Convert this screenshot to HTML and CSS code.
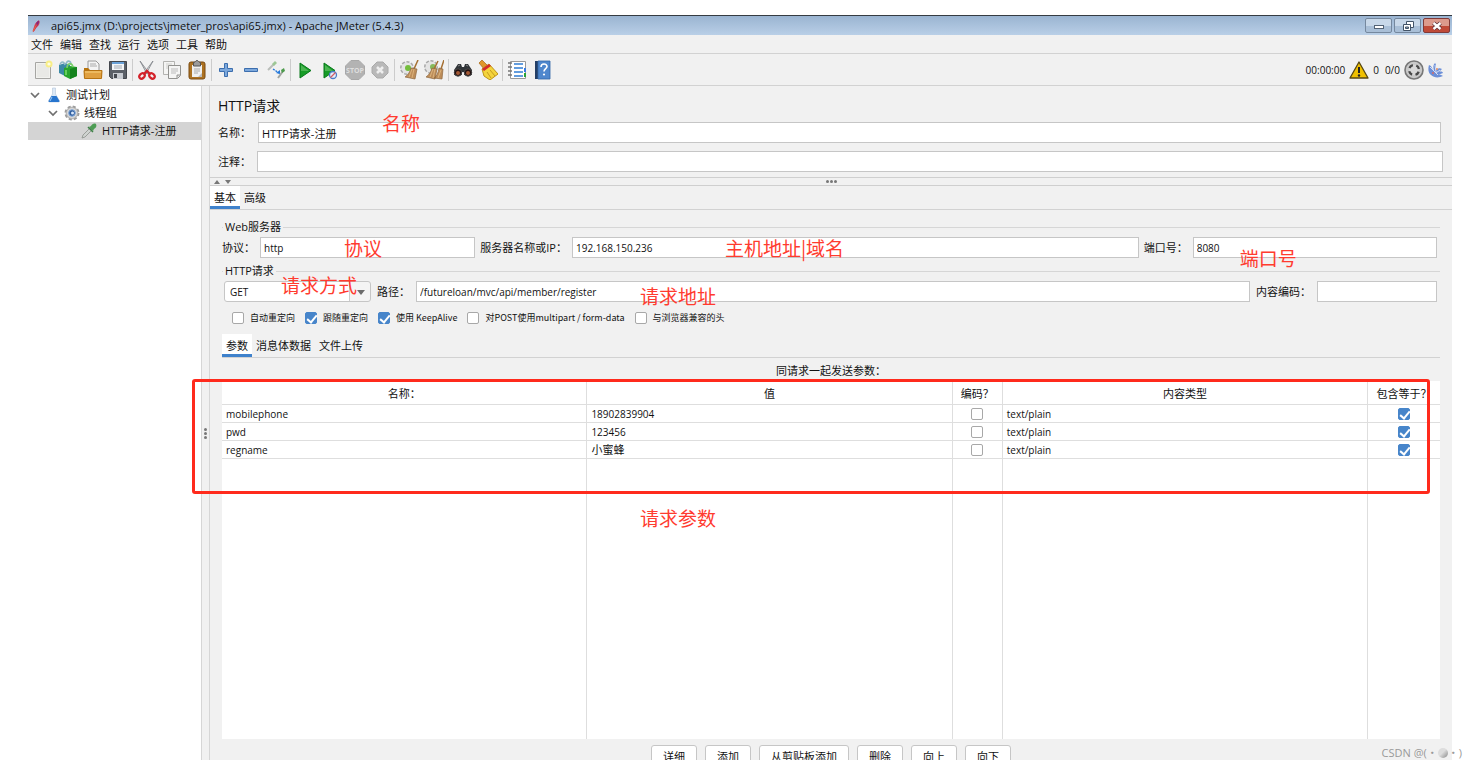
FILE: index.html
```html
<!DOCTYPE html>
<html lang="zh-CN">
<head>
<meta charset="utf-8">
<title>api65.jmx - Apache JMeter (5.4.3)</title>
<link rel="stylesheet" href="styles.css">
</head>
<body>
<div class="app">
  <header class="titlebar">
    <svg class="title-icon" viewBox="0 0 16 16"><path d="M4 15 6 9C7 5 9 2 12 1c1 3-1 7-4 9l-3 5z" fill="#d22648" stroke="#d22648"/><path d="M8 9c2-2 4-5 4-8-1 0-2 1-3 2z" fill="#7b2a80"/><path d="M4 15 9 6" stroke="#f08038" fill="none"/></svg>
    <span class="title-text">api65.jmx (D:\projects\jmeter_pros\api65.jmx) - Apache JMeter (5.4.3)</span>
    <div class="window-buttons">
      <button class="win" aria-label="最小化"><svg viewBox="0 0 16 12"><rect x="3.500" y="5.500" width="9" height="3" fill="#fff" stroke="#536375"/></svg></button>
      <button class="win" aria-label="还原"><svg viewBox="0 0 16 12"><path d="M6.500 1.500h7v6h-7z" fill="#fff" stroke="#435468"/><path d="M3.500 4.500h7v6h-7z" fill="#fff" stroke="#435468"/><path d="M5.500 7h3v1.500h-3z" fill="#9ab" stroke="#435468"/></svg></button>
      <button class="win close" aria-label="关闭"><svg viewBox="0 0 16 12"><path d="m4.500 3 7 6m0-6-7 6" stroke="#5b3038" stroke-width="4"/><path d="m4.500 3 7 6m0-6-7 6" stroke="#fff" stroke-width="2.400"/></svg></button>
    </div>
  </header>
  <nav class="menubar">
    <button>文件</button><button>编辑</button><button>查找</button><button>运行</button><button>选项</button><button>工具</button><button>帮助</button>
  </nav>
  <div class="toolbar">
    <button class="tool" aria-label="新建"><svg viewBox="0 0 20 20"><path d="M2.500 2.500h15v16h-15z" fill="#f2f2ef" stroke="#a6a6a3"/><path d="M4 4h12v13H4z" fill="#e9e9e6"/><circle cx="16" cy="4" r="3.500" fill="#f8ee86"/><circle cx="16" cy="4" r="1.600" fill="#fffde0"/></svg></button>
    <button class="tool" aria-label="模板"><svg viewBox="0 0 20 20"><path d="m1 5 6-2 5 2v9l-5 2-6-3z" fill="#3b89a6"/><path d="M2 5c1-4 4-4 5 0m1-1c1-4 5-4 5 1" fill="none" stroke="#8fb9c7" stroke-width="1.600"/><path d="m6 8 6-2 7 1v9l-7 3-6-3z" fill="#28a52e"/><path d="m12 9 7-2v9l-7 3z" fill="#14831d"/><path d="M9 8c0-5 5-6 6-1" fill="none" stroke="#79cf66" stroke-width="1.600"/><path d="M8 10v5" stroke="#7ddc70" stroke-width="1.500"/></svg></button>
    <button class="tool" aria-label="打开"><svg viewBox="0 0 20 20"><path d="M5 1h8l3 3v7H5z" fill="#f4f4f4" stroke="#989898"/><path d="M7 4h6M7 6h7" stroke="#aaa"/><path d="M1 8h4l2 2h12v8H1z" fill="#b8740d"/><path d="M1 10.500h18l-.5 8h-17z" fill="#e0a040" stroke="#b67313"/><path d="M2 12h16" stroke="#f9d37e"/></svg></button>
    <button class="tool" aria-label="保存"><svg viewBox="0 0 20 20"><path d="M1.500 1.500h17v17h-15l-2-2z" fill="#5b6068" stroke="#43474d"/><path d="M4 2h12v8H4z" fill="#f4f6f8"/><path d="M4 2h12v2H4z" fill="#6ba2d8"/><path d="M6 6h8M6 8h8" stroke="#a5abb3"/><path d="M5 13h10v6H5z" fill="#c8ccd2"/><path d="M6 14h3v4H6z" fill="#454950"/></svg></button>
    <span class="sep"></span>
    <button class="tool" aria-label="剪切"><svg viewBox="0 0 20 20"><path d="m3 1 9 12-2 1z" fill="#d2d5d7" stroke="#7d8286" stroke-width=".8"/><path d="m16 1-9 12 2 1z" fill="#eceeef" stroke="#7d8286" stroke-width=".8"/><ellipse cx="5" cy="16" rx="3" ry="2.300" transform="rotate(-45 5 16)" fill="none" stroke="#d3222a" stroke-width="2.200"/><ellipse cx="15" cy="16" rx="3" ry="2.300" transform="rotate(45 15 16)" fill="none" stroke="#d3222a" stroke-width="2.200"/><path d="m7 14 3-3 3 3" fill="none" stroke="#d3222a" stroke-width="2.300"/></svg></button>
    <button class="tool" aria-label="复制"><svg viewBox="0 0 20 20"><path d="M1.500 1.500h11v13h-11z" fill="#f5f5f4" stroke="#b3b3b0"/><path d="M4 4h6M4 6h6M4 8h3" stroke="#cfcfcc"/><path d="M6.500 5.500h12v10l-3 3h-9z" fill="#f5f5f4" stroke="#92928f"/><path d="M9 9h7M9 11h7M9 13h5" stroke="#bbb"/><path d="M18 15h-3v3" fill="#ddd" stroke="#92928f"/></svg></button>
    <button class="tool" aria-label="粘贴"><svg viewBox="0 0 20 20"><rect x="2" y="2" width="16" height="17" rx="2" fill="#ad7221" stroke="#7b4b12"/><path d="M5 5h10v12H5z" fill="#f0f0ef"/><path d="M6.500 2.500c2 0 2-2 3.500-2s1.500 2 3.500 2V6h-7z" fill="#9b9b9b" stroke="#555"/><path d="M7 9h6M7 11h6M7 13h4" stroke="#aaa"/><path d="M11 17l4-4v4z" fill="#bbb"/></svg></button>
    <span class="sep"></span>
    <button class="tool" aria-label="展开"><svg viewBox="0 0 20 20"><path d="M8.500 3.500h3v5h5v3h-5v5h-3v-5h-5v-3h5z" fill="#7ca8dc" stroke="#3c6eae"/></svg></button>
    <button class="tool" aria-label="折叠"><svg viewBox="0 0 20 20"><path d="M3.500 8.500h13v3h-13z" fill="#7ca8dc" stroke="#3c6eae"/></svg></button>
    <button class="tool" aria-label="切换"><svg viewBox="0 0 20 20"><path d="m2 10 6-6" stroke="#b9bdb9" stroke-width="2"/><path d="m6 4 3-3 2 2-3 3z" fill="#9dc795"/><path d="m12 18 5-7" stroke="#a0a5a0" stroke-width="2"/><path d="m15 10 3-2 1 3-3 2z" fill="#4d9b4c"/><path d="m7 9 6 4" stroke="#2478db" stroke-width="1.300" stroke-dasharray="2 1"/><path d="m14 10 0 4-4-1z" fill="#2478db"/></svg></button>
    <span class="sep"></span>
    <button class="tool" aria-label="启动"><svg viewBox="0 0 20 20"><path d="m5 3 11 7.500L5 18z" fill="#169c27" stroke="#08791a"/><path d="m6 5 8 6H6z" fill="#4cb552"/></svg></button>
    <button class="tool" aria-label="不停顿启动"><svg viewBox="0 0 20 20"><path d="m4 3 11 7.500L4 18z" fill="#169c27" stroke="#08791a"/><path d="m5 5 8 6H5z" fill="#4cb552"/><circle cx="13" cy="15" r="3.500" fill="#e8edf8" stroke="#4a7cc8" stroke-width="1.300"/><path d="m10.500 17.500 5-5" stroke="#d25c65" stroke-width="1.300"/></svg></button>
    <button class="tool" aria-label="停止" disabled><svg viewBox="0 0 20 20"><path d="M6 .5h8L19.500 6v8L14 19.500H6L.5 14V6z" fill="#b3b3b3" stroke="#a8a8a8"/><text x="10" y="12.500" text-anchor="middle" class="stop-label">STOP</text></svg></button>
    <button class="tool" aria-label="关闭线程" disabled><svg viewBox="0 0 20 20"><path d="M7 2h6l5 5v6l-5 5H7l-5-5V7z" fill="#b9b9b9" stroke="#aaa"/><path d="m7 7 6 6m0-6-6 6" stroke="#eee" stroke-width="2.500"/></svg></button>
    <span class="sep"></span>
    <button class="tool" aria-label="清除"><svg viewBox="0 0 20 20"><circle cx="8" cy="8" r="6" fill="#e4e4e4" stroke="#aaa" stroke-width="2" stroke-dasharray="3 1.500"/><circle cx="8" cy="8" r="5.500" fill="#e4e4e4"/><circle cx="9" cy="8" r="3" fill="#74bd3d"/><path d="m19 0-4 9" stroke="#a56f31" stroke-width="1.500"/><path d="m12 8 6 1-2 10-10-2c3-2 5-5 6-9z" fill="#bd8d5a" stroke="#8f683f" stroke-width=".7"/><path d="m13 9-3 8m5-8-2 9" stroke="#e3bc84" stroke-width=".8"/></svg></button>
    <button class="tool" aria-label="清除全部"><svg viewBox="0 0 20 20"><circle cx="7" cy="7" r="6" fill="#e4e4e4" stroke="#aaa" stroke-width="2" stroke-dasharray="3 1.500"/><circle cx="7" cy="7" r="5.500" fill="#e4e4e4"/><circle cx="9" cy="7" r="3" fill="#85b95b"/><path d="m14 1-4 8m10-9-3 9" stroke="#a56f31" stroke-width="1.500"/><path d="m8 8 5 1-2 10-9-2c3-2 5-5 6-9zm7 0 4 1-1 10-8-1c3-2 4-5 5-10z" fill="#bd8d5a" stroke="#8f683f" stroke-width=".7"/><path d="m9 9-3 8m5-8-2 9m8-8-3 8" stroke="#e3bc84" stroke-width=".8"/></svg></button>
    <span class="sep"></span>
    <button class="tool" aria-label="查找"><svg viewBox="0 0 20 20"><path d="m1 10 4-6h3l1 3h2l1-3h3l4 6v5h-8v-3H9v3H1z" fill="#303438"/><path d="m5 6 2-1m6 0 2 1" stroke="#888"/><circle cx="5" cy="12.500" r="3.700" fill="#211" stroke="#4c4c4c"/><circle cx="15" cy="12.500" r="3.700" fill="#211" stroke="#4c4c4c"/><circle cx="5" cy="13" r="2" fill="#a45a36"/><circle cx="15" cy="13" r="2" fill="#a45a36"/></svg></button>
    <button class="tool" aria-label="重置查找"><svg viewBox="0 0 20 20"><path d="m1 3 3-3 6 6-4 3z" fill="#e0962b" stroke="#a56616" stroke-width=".7"/><path d="m4 9 7-5 9 10-8 6-6-4z" fill="#f4d43c" stroke="#bd9318"/><path d="m4 9 7-5 2 2-7 5z" fill="#d32a2c"/><path d="m9 12 4 6m-1-8 5 6" stroke="#c69b22"/></svg></button>
    <span class="sep"></span>
    <button class="tool" aria-label="函数助手"><svg viewBox="0 0 20 20"><path d="M3.500 1.500h15v17h-15z" fill="#fff" stroke="#999"/><path d="M1 3h4M1 7h4M1 11h4M1 15h4" stroke="#777" stroke-width="1.300"/><path d="M7 4h9M7 8h9M7 12h9M7 16h9" stroke="#317ed4" stroke-width="1.300"/><path d="M18 8v4" stroke="#3a7be0" stroke-width="2"/><path d="M18 13v4" stroke="#27a437" stroke-width="2"/></svg></button>
    <button class="tool" aria-label="帮助"><svg viewBox="0 0 20 20"><path d="M3 1h15v18H3z" fill="#4f87cd"/><path d="M3 1h3v18H3z" fill="#243f66"/><path d="M6 1h12v18H6z" fill="none" stroke="#3467a8" stroke-width=".8"/><path d="M9 7c0-4 6-4 6-.5 0 2-3 2.500-3 5" fill="none" stroke="#fff" stroke-width="1.600"/><circle cx="12" cy="14.500" r="1.100" fill="#fff"/></svg></button>
    <div class="status">
      <span class="num">00:00:00</span>
      <svg class="warn" viewBox="0 0 20 18"><path d="m10 1 9 16H1z" fill="#f0c000" stroke="#574713" stroke-width="1.300" stroke-linejoin="round"/><path d="M10 6v6" stroke="#222" stroke-width="2"/><circle cx="10" cy="14.500" r="1.200" fill="#222"/></svg>
      <span class="num">0</span>
      <span class="num total">0/0</span>
      <svg class="ring" viewBox="0 0 20 20"><circle cx="10" cy="10" r="9" fill="#c9c9c9" stroke="#777" stroke-width="1.600"/><circle cx="10" cy="10" r="5" fill="#d8d8d8" stroke="#484848" stroke-width="2.300" stroke-dasharray="4.300 3.550" stroke-dashoffset="-1.800"/></svg>
      <svg class="feather" viewBox="0 0 16 16"><path d="M1 3c3 1 3 4 5 6-1-4-1-6 1-8 2 2 0 5 2 7 1-2 3-2 5-1l-3 3c2-1 4 0 4 1-2 1-3 1-5 1 2 0 3 1 5 2-4 2-9 2-12-1C0 11 0 6 1 3z" fill="#6c8fd8"/><path d="m2 5 8 8M7 3l1 7m4-2-4 3" stroke="#d5def5" fill="none"/><circle cx="5" cy="11" r="1" fill="#d66a68"/><circle cx="9" cy="7" r="1" fill="#e99060"/></svg>
    </div>
  </div>
  <div class="workspace">
    <aside class="tree">
      <div class="node"><svg class="chev" viewBox="0 0 10 8"><path d="m1 2 4 4 4-4" fill="none" stroke="#6f6f6f" stroke-width="1.700"/></svg>
        <svg class="node-icon" viewBox="0 0 16 16"><path d="M6.500 1h3v6l4 7q0 1-1 1h-9q-1 0-1-1l4-7z" fill="#dce9f7" stroke="#b4c5d8" stroke-width=".6"/><path d="M5.500 9h5l3 5q0 1-1 1h-9q-1 0-1-1z" fill="#2775ce"/><path d="m6 10-2 4" stroke="#9bc9f5"/></svg>测试计划</div>
      <div class="node level1"><svg class="chev" viewBox="0 0 10 8"><path d="m1 2 4 4 4-4" fill="none" stroke="#6f6f6f" stroke-width="1.700"/></svg>
        <svg class="node-icon" viewBox="0 0 16 16"><circle cx="8" cy="8" r="6.500" fill="#ccc" stroke="#9c9c9c" stroke-width="2" stroke-dasharray="3 2.100"/><circle cx="8" cy="8" r="5.500" fill="#d9d9d9" stroke="#aaa" stroke-width=".7"/><circle cx="8" cy="8" r="3.300" fill="#315f9f" stroke="#83aadb"/><circle cx="8.500" cy="8" r="1.500" fill="#d8e7fa"/></svg>线程组</div>
      <div class="node level2 selected">
        <svg class="node-icon" viewBox="0 0 16 16"><path d="m1 15 1-3 7-7 2 2-7 7z" fill="#cfd3d0" stroke="#8b908b" stroke-width=".8"/><path d="m8 4 4 4 1-2c2-1 3-3 2-5-2-1-4 0-5 2z" fill="#4d9d54"/><path d="m7 4 5 5" stroke="#3f8047" stroke-width="1.500"/></svg>HTTP请求-注册</div>
    </aside>
    <div class="splitter"><span class="dots vertical"><i></i><i></i><i></i></span></div>
    <main class="main">
      <section class="head">
        <h1>HTTP请求</h1>
        <div class="line name-line"><label for="name">名称：</label><div class="field grow"><input id="name" value="HTTP请求-注册"><span class="note note-name">名称</span></div></div>
        <div class="line comment-line"><label for="comment">注释：</label><input id="comment" class="grow"></div>
      </section>
      <div class="h-splitter"><span class="arrows"><i class="up"></i><i class="down"></i></span><span class="dots"><i></i><i></i><i></i></span></div>
      <div class="tabs main-tabs"><button class="active">基本</button><button>高级</button></div>
      <section class="panel">
        <div class="group">
          <h2>Web服务器</h2>
          <div class="line server-line">
            <label for="protocol">协议：</label><div class="field protocol"><input id="protocol" class="num" value="http"><span class="note note-protocol">协议</span></div>
            <label for="server">服务器名称或IP：</label><div class="field server"><input id="server" class="num" value="192.168.150.236"><span class="note note-server">主机地址|域名</span></div>
            <label for="port">端口号：</label><div class="field port"><input id="port" class="num" value="8080"><span class="note note-port">端口号</span></div>
          </div>
        </div>
        <div class="group">
          <h2>HTTP请求</h2>
          <div class="line request-line">
            <div class="field method"><select class="num" aria-label="请求方式"><option>GET</option></select><span class="select-arrow"></span><span class="note note-method">请求方式</span></div>
            <label for="path">路径：</label><div class="field grow path"><input id="path" class="num" value="/futureloan/mvc/api/member/register"><span class="note note-path">请求地址</span></div>
            <label for="encoding">内容编码：</label><input id="encoding" class="encoding">
          </div>
        </div>
        <div class="checks">
          <label><input type="checkbox">自动重定向</label>
          <label><input type="checkbox" checked>跟随重定向</label>
          <label><input type="checkbox" checked>使用 KeepAlive</label>
          <label><input type="checkbox">对POST使用multipart / form-data</label>
          <label><input type="checkbox">与浏览器兼容的头</label>
        </div>
        <div class="tabs sub-tabs"><button class="active">参数</button><button>消息体数据</button><button>文件上传</button></div>
        <div class="caption">同请求一起发送参数：</div>
        <div class="table-area">
          <table>
            <colgroup><col class="c-wide"><col class="c-wide"><col class="c-enc"><col class="c-wide"><col class="c-inc"></colgroup>
            <thead><tr><th>名称：</th><th>值</th><th>编码？</th><th>内容类型</th><th>包含等于？</th></tr></thead>
            <tbody>
              <tr><td class="num">mobilephone</td><td class="num">18902839904</td><td class="tick"><input type="checkbox" aria-label="编码 mobilephone"></td><td class="num">text/plain</td><td class="tick"><input type="checkbox" aria-label="包含等于 mobilephone" checked></td></tr>
              <tr><td class="num">pwd</td><td class="num">123456</td><td class="tick"><input type="checkbox" aria-label="编码 pwd"></td><td class="num">text/plain</td><td class="tick"><input type="checkbox" aria-label="包含等于 pwd" checked></td></tr>
              <tr><td class="num">regname</td><td>小蜜蜂</td><td class="tick"><input type="checkbox" aria-label="编码 regname"></td><td class="num">text/plain</td><td class="tick"><input type="checkbox" aria-label="包含等于 regname" checked></td></tr>
              <tr class="rest"><td></td><td></td><td></td><td></td><td></td></tr>
            </tbody>
          </table>
          <div class="mark"></div>
          <span class="note note-params">请求参数</span>
        </div>
        <div class="actions"><button>详细</button><button>添加</button><button>从剪贴板添加</button><button>删除</button><button>向上</button><button>向下</button></div>
      </section>
    </main>
  </div>
</div>
<div class="watermark">CSDN @(・<i></i>・)</div>
</body>
</html>
```
FILE: styles.css
```css
* { box-sizing: border-box; }
body {
  margin: 0;
  height: 100vh;
  padding: 15px 24px 8px 28px;
  background: #fff;
  color: #111;
  font: 11px/16px "Open Sans", "Noto Sans CJK SC", sans-serif;
  position: relative;
}
button, input, select { font: inherit; color: inherit; margin: 0; }
button { border: 0; padding: 0; background: none; white-space: nowrap; }
h1, h2 { margin: 0; font-weight: 400; }
svg { display: block; }
.num, .line .num { font-size: 10px; }

.app {
  height: 100%;
  display: flex;
  flex-direction: column;
  overflow: hidden;
  background: #f1f1f1;
}

.titlebar {
  flex: 0 0 20px;
  display: flex;
  align-items: center;
  padding: 0 2px;
  border-top: 1px solid #353b42;
  background: linear-gradient(#9ab4d1, #b9cfe7);
}
.title-icon { width: 12px; height: 14px; margin-right: 9px; }
.title-text { flex: 1; line-height: 18px; }
.window-buttons { display: flex; gap: 2px; }
.win {
  width: 27px;
  height: 15px;
  display: grid;
  place-items: center;
  border: 1px solid #75889e;
  border-radius: 2px;
  background: linear-gradient(#c8d8e9 50%, #a9bfd7 50%);
}
.win svg { width: 16px; height: 12px; }
.close { border-color: #803a38; background: linear-gradient(#dc9a8c 50%, #c04a38 50%); }

.menubar {
  flex: 0 0 18px;
  display: flex;
  gap: 7px;
  padding: 1px 3px 0;
}

.toolbar {
  flex: 0 0 33px;
  display: flex;
  align-items: center;
  padding: 0 8px 0 2px;
  border: 1px solid #d2d2d2;
  border-width: 1px 0;
}
.tool { flex: 0 0 25px; height: 25px; display: grid; place-items: center; }
.tool svg { width: 20px; height: 20px; }
.stop-label { font: bold 7px "Open Sans", sans-serif; fill: #dedede; }
.sep { flex: 0 0 4px; height: 22px; background: linear-gradient(#ccc, #ccc) center / 1px 100% no-repeat; }
.status { margin-left: auto; display: flex; align-items: center; gap: 4px; }
.total { padding-left: 2px; }
.warn { width: 20px; height: 18px; }
.ring { width: 20px; height: 20px; }
.feather { width: 16px; height: 16px; }

.workspace { flex: 1; min-height: 0; display: flex; }
.tree { flex: 0 0 173px; background: #fff; }
.node { height: 18px; display: flex; align-items: center; padding-left: 2px; }
.level1 { padding-left: 20px; }
.level2 { padding-left: 53px; }
.selected { background: #d4d4d4; }
.chev { width: 10px; height: 8px; margin-right: 6px; }
.node-icon { width: 16px; height: 16px; margin-right: 4px; }
.level2 .node-icon { margin-right: 5px; }
.splitter {
  flex: 0 0 9px;
  display: grid;
  place-items: center;
  padding-top: 20px;
  border: 1px solid #d6d6d6;
  border-width: 0 1px;
}
.dots { display: flex; gap: 1px; }
.dots i { width: 3px; height: 3px; border-radius: 50%; background: #777; }
.vertical { flex-direction: column; }

.main { flex: 1; min-width: 0; display: flex; flex-direction: column; }
.head { padding: 10px 9px 5px 8px; }
h1 { font-size: 14px; line-height: 20px; }
.line { display: flex; align-items: center; }
.line label { white-space: nowrap; }
.line input {
  height: 21px;
  padding: 0 3px;
  border: 1px solid #c6c6c6;
  border-radius: 0;
  background: #fff;
  outline: 0;
}
.field { position: relative; display: flex; }
.field input { flex: 1; min-width: 0; width: 100%; }
.grow { flex: 1; min-width: 0; }
.name-line { margin: 6px 2px 0 0; gap: 7px; }
.comment-line { margin-top: 8px; gap: 6px; }
.h-splitter {
  flex: 0 0 9px;
  display: grid;
  grid-template-columns: 1fr auto 1fr;
  align-items: center;
  border: 1px solid #cfcfcf;
  border-width: 1px 0;
}
.arrows { display: flex; gap: 5px; padding-left: 4px; }
.up, .down { border: 3px solid transparent; border-top-width: 0; border-bottom: 4px solid #777; }
.down { border-bottom-width: 0; border-top: 4px solid #777; }

.tabs { display: flex; border-bottom: 1px solid #d2d2d2; }
.tabs button { height: 23px; padding: 4px 4px 0; border-bottom: 3px solid transparent; }
.tabs .active { background: #fff; border-bottom-color: #3f82cc; }

.panel { flex: 1; min-height: 0; display: flex; flex-direction: column; padding: 9px 12px 0; }
.group { padding-right: 3px; }
h2 { display: flex; align-items: center; gap: 2px; font-size: 11px; line-height: 16px; }
h2::before, h2::after { content: ""; height: 1px; background: #d6d6d6; }
h2::before { width: 1px; }
h2::after { flex: 1; margin-right: -3px; }
.server-line { margin: 2px 0 5px; gap: 5px; }
.protocol { flex: 215 1 0; }
.server { flex: 566 1 0; }
.port { flex: 244 1 0; }
.request-line { margin-top: 2px; padding-left: 2px; gap: 6px; }
.method { flex: 0 0 147px; }
.method select {
  appearance: none;
  width: 100%;
  height: 21px;
  padding: 0 5px;
  border: 1px solid #c6c6c6;
  border-radius: 3px;
  background: linear-gradient(to left, #f4f4f4 20px, #ccc 20px, #ccc 21px, #fff 21px);
}
.select-arrow {
  position: absolute;
  right: 6px;
  top: 9px;
  border: 4px solid transparent;
  border-top: 5px solid #6c6c6c;
  border-bottom: 0;
  pointer-events: none;
}
.encoding { flex: 0 0 120px; min-width: 0; width: 120px; }

.note {
  position: absolute;
  color: #ff3b2f;
  font: 400 19px/24px "Noto Sans CJK SC", sans-serif;
  white-space: nowrap;
  pointer-events: none;
}
.note-name { left: 124px; top: -11px; }
.note-protocol { left: 84px; top: -1px; }
.note-server { left: 27%; top: -1px; }
.note-port { left: 47px; top: 9px; }
.note-method { left: 57px; top: -8px; }
.note-path { left: 224px; top: 3px; }
.note-params { left: 418px; top: 125px; }

.checks {
  display: flex;
  gap: 10px;
  padding: 8px 10px 8px;
  font: 9px/16px "Noto Sans CJK SC", sans-serif;
}
.checks label { display: flex; align-items: center; gap: 6px; }
input[type="checkbox"] {
  appearance: none;
  flex: none;
  position: relative;
  width: 12px;
  height: 12px;
  border: 1px solid #a8a8a8;
  border-radius: 2px;
  background: #fff;
}
input[type="checkbox"]:checked { background: #4785ca; border-color: #4785ca; }
input[type="checkbox"]:checked::after {
  content: "";
  position: absolute;
  left: 3px;
  top: 0;
  width: 4px;
  height: 8px;
  border: solid #fff;
  border-width: 0 2px 2px 0;
  transform: rotate(40deg);
}
.caption { text-align: center; line-height: 16px; padding: 5px 0 2px; }

.table-area { flex: 1; min-height: 0; position: relative; }
table {
  width: 100%;
  height: 100%;
  table-layout: fixed;
  border-collapse: separate;
  border-spacing: 0;
  background: #fff;
}
.c-wide { width: 30%; }
.c-enc { width: 4.1%; }
.c-inc { width: 5.9%; }
th, td { padding: 0 4px; font-weight: 400; white-space: nowrap; border-right: 1px solid #dedede; border-bottom: 1px solid #dedede; }
th:last-child, td:last-child { border-right: 0; }
th { height: 24px; padding: 2px 0 0; }
td { height: 18px; line-height: 16px; text-align: left; }
.tick { text-align: center; }
.tick input { display: block; margin: auto; }
.rest td { height: auto; border-bottom: 0; }
.mark {
  position: absolute;
  left: -30px;
  right: 10px;
  top: -2px;
  height: 115px;
  border: 3px solid #ff2a1c;
  border-radius: 3px;
  pointer-events: none;
}
.actions {
  flex: 0 0 21px;
  min-height: 0;
  display: flex;
  align-items: flex-start;
  justify-content: center;
  gap: 8px;
  padding-top: 6px;
}
.actions button { flex: none; height: 24px; padding: 0 11px; border: 1px solid #c6c6c6; border-radius: 3px; background: #fff; }

.watermark {
  position: absolute;
  right: 14px;
  bottom: 7px;
  display: flex;
  align-items: center;
  color: #999;
  font-size: 11px;
}
.watermark i { width: 10px; height: 10px; border-radius: 50%; background: linear-gradient(135deg, #ddd 45%, #888); }
```
